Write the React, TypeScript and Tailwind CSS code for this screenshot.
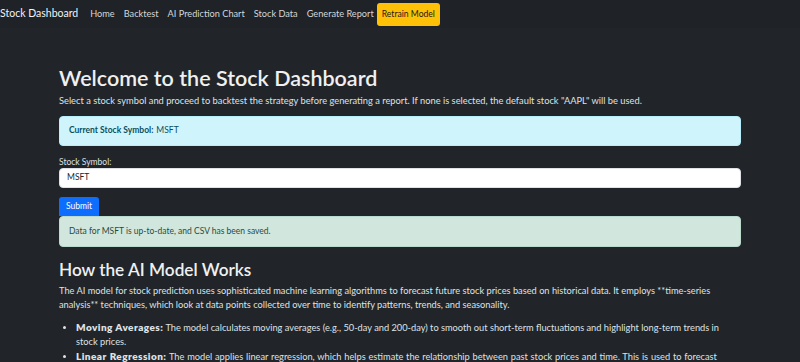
import React from "react";

const links = ["Home", "Backtest", "AI Prediction Chart", "Stock Data", "Generate Report"];

export default function App() {
  return (
    <div className="min-h-screen bg-[#212529] text-[#dee2e6] font-['Lato',sans-serif]">
      {/* Navbar */}
      <nav className="h-[28px] bg-[#1f2226] flex items-center">
        <span className="text-[10.5px] text-[#f1f3f5] mr-[12px]">Stock Dashboard</span>
        <div className="flex items-center gap-[9px] text-[9.2px] text-[#d3d6d9]">
          {links.map((l) => (
            <span key={l}>{l}</span>
          ))}
          <button className="ml-[-6px] h-[23px] px-[5px] rounded-[3px] bg-[#ffc107] text-[#1a1a1a] text-[8.6px]">
            Retrain Model
          </button>
        </div>
      </nav>

      {/* Main */}
      <main className="w-[682px] mx-auto pt-[38px]">
        <h1 className="text-[21.5px] leading-[1.2] font-semibold text-[#eef0f2] mb-[2px]">
          Welcome to the Stock Dashboard
        </h1>
        <p className="text-[9.3px] leading-[14px] mb-[8px]">
          Select a stock symbol and proceed to backtest the strategy before generating a report. If none is selected, the default stock "AAPL" will be used.
        </p>

        <div className="h-[30px] flex items-center px-[9px] bg-[#cff4fc] border border-[#b6effb] rounded-[4px] text-[8.5px] text-[#0b4f5c]">
          <span className="font-bold mr-[3px]">Current Stock Symbol:</span>
          <span>MSFT</span>
        </div>

        <label className="block mt-[9px] text-[8.5px] leading-[14px]">Stock Symbol:</label>
        <div className="mt-[-1px] h-[20px] bg-white border border-[#dee2e6] rounded-[4px] flex items-center px-[7px] text-[8.5px] text-[#212529]">
          MSFT
        </div>
        <button className="mt-[9px] h-[19px] w-[40px] bg-[#0d6efd] rounded-t-[3px] text-white text-[8.5px] block">
          Submit
        </button>
        <div className="h-[31px] flex items-center px-[9px] bg-[#d1e7dd] border border-[#badbcc] rounded-[4px] text-[8.5px] text-[#2c4a3c]">
          Data for MSFT is up-to-date, and CSV has been saved.
        </div>

        <h2 className="mt-[13px] text-[17.2px] leading-[1.2] font-semibold text-[#eef0f2] mb-[4px]">
          How the AI Model Works
        </h2>
        <p className="text-[9.25px] leading-[14px] mb-[8px]">
          The AI model for stock prediction uses sophisticated machine learning algorithms to forecast future stock prices based on historical data. It employs **time-series analysis** techniques, which look at data points collected over time to identify patterns, trends, and seasonality.
        </p>
        <ul className="list-disc pl-[17px] pr-[5px] text-[9.25px] leading-[14px]">
          <li>
            <strong className="text-[10px] font-extrabold tracking-[0.45px]">Moving Averages:</strong> The model calculates moving averages (e.g., 50-day and 200-day) to smooth out short-term fluctuations and highlight long-term trends in stock prices.
          </li>
          <li className="[word-spacing:0.4px]">
            <strong className="text-[10px] font-extrabold tracking-[0.45px]">Linear Regression:</strong> The model applies linear regression, which helps estimate the relationship between past stock prices and time. This is used to forecast future prices based on the trend line.
          </li>
        </ul>
      </main>
    </div>
  );
}
